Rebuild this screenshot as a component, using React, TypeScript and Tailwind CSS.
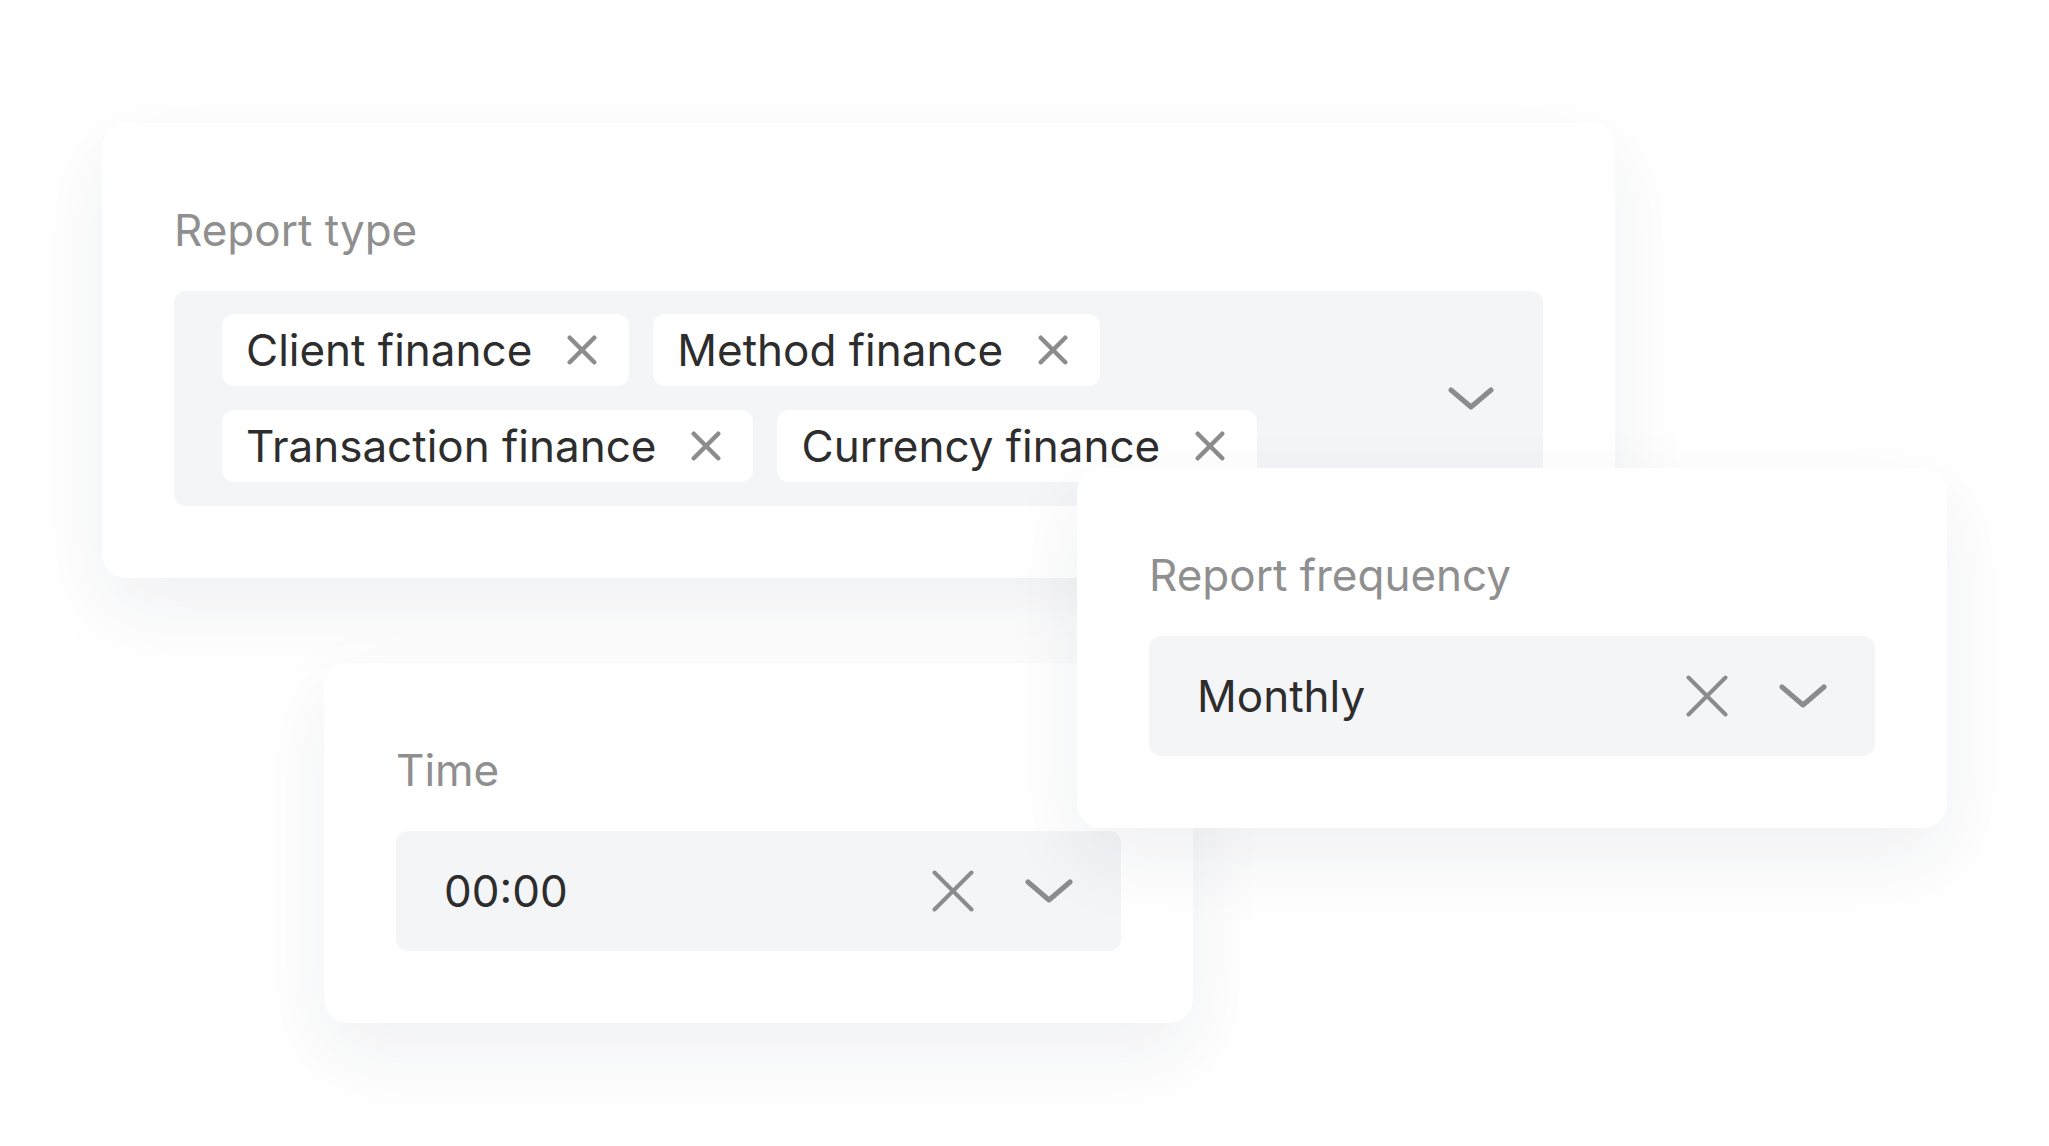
import React from "react";

const font = { fontFamily: "Inter, 'Noto Sans', sans-serif" };

const CloseIcon: React.FC<{ size?: number; stroke?: number }> = ({ size = 30, stroke = 4.5 }) => (
  <svg width={size} height={size} viewBox={`0 0 ${size} ${size}`} fill="none" className="shrink-0">
    <path
      d={`M${stroke / 2 + 0.5} ${stroke / 2 + 0.5}L${size - stroke / 2 - 0.5} ${size - stroke / 2 - 0.5}M${size - stroke / 2 - 0.5} ${stroke / 2 + 0.5}L${stroke / 2 + 0.5} ${size - stroke / 2 - 0.5}`}
      stroke="#8c8c8c"
      strokeWidth={stroke}
      strokeLinecap="round"
    />
  </svg>
);

const ChevronDown: React.FC<{ w?: number; h?: number }> = ({ w = 48, h = 24 }) => (
  <svg width={w} height={h} viewBox={`0 0 ${w} ${h}`} fill="none" className="shrink-0">
    <polyline
      points={`3,3 ${w / 2},${h - 3} ${w - 3},3`}
      stroke="#8c8c8c"
      strokeWidth={5}
      strokeLinecap="round"
      strokeLinejoin="round"
    />
  </svg>
);

const Label: React.FC<{ children: React.ReactNode }> = ({ children }) => (
  <div className="pt-[5px] pb-[31px] text-[44px] leading-[60px] text-[#8f8f8f]">{children}</div>
);

const Chip: React.FC<{ label: string }> = ({ label }) => (
  <div className="flex h-[72px] items-center rounded-[12px] bg-white pl-[24px] pr-[32px]">
    <span className="text-[44px] leading-none text-[#2d2d2d]">{label}</span>
    <span className="ml-[35px] flex items-center">
      <CloseIcon size={30} stroke={4.5} />
    </span>
  </div>
);

const SingleSelect: React.FC<{ value: string }> = ({ value }) => (
  <div className="flex h-[120px] items-center rounded-[12px] bg-[#f4f5f7] pl-[48px] pr-[48px]">
    <span className="flex-1 text-[44px] leading-none text-[#2d2d2d]">{value}</span>
    <CloseIcon size={42} stroke={4} />
    <span className="ml-[51px] flex items-center">
      <ChevronDown w={48} h={24} />
    </span>
  </div>
);

const cardClass =
  "absolute rounded-[24px] bg-white p-[72px] shadow-[0_30px_80px_rgba(28,39,76,0.07)]";

export default function App() {
  const reportTypes = ["Client finance", "Method finance", "Transaction finance", "Currency finance"];

  return (
    <div className="relative h-[1146px] w-[2049px] overflow-hidden bg-white" style={font}>
      {/* report type, multi select */}
      <div className={`${cardClass} left-[102px] top-[123px] w-[1513px]`}>
        <Label>Report type</Label>
        <div className="flex items-center rounded-[12px] bg-[#f4f5f7] pb-[24px] pl-[48px] pr-[49px] pt-[23px]">
          <div className="flex flex-1 flex-wrap gap-x-[24px] gap-y-[24px]">
            {reportTypes.map((t) => (
              <Chip key={t} label={t} />
            ))}
          </div>
          <ChevronDown w={46} h={23} />
        </div>
      </div>

      {/* time */}
      <div className={`${cardClass} left-[324px] top-[663px] w-[869px]`}>
        <Label>Time</Label>
        <SingleSelect value="00:00" />
      </div>

      {/* report frequency */}
      <div className={`${cardClass} left-[1077px] top-[468px] w-[870px]`}>
        <Label>Report frequency</Label>
        <SingleSelect value="Monthly" />
      </div>
    </div>
  );
}
